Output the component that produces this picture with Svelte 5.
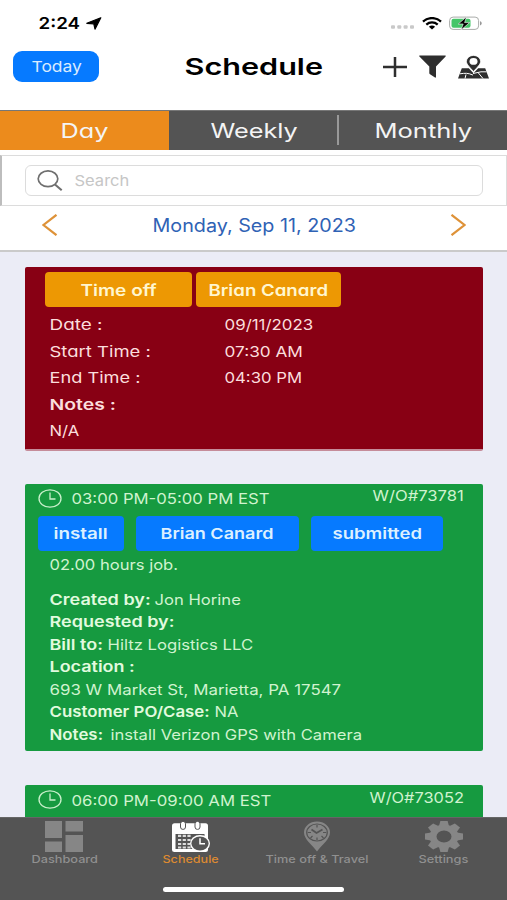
<script>
  const tabs = [
    { label: 'Day', w: 47 },
    { label: 'Weekly', w: 86 },
    { label: 'Monthly', w: 96 }
  ];
  const timeOff = [
    { label: 'Date :', lw: 52, value: '09/11/2023', vw: 88 },
    { label: 'Start Time :', lw: 100, value: '07:30 AM', vw: 77 },
    { label: 'End Time :', lw: 90, value: '04:30 PM', vw: 77 },
    { label: 'Notes :', lw: 65, strong: true },
    { label: 'N/A', lw: 29 }
  ];
  const details = [
    { label: 'Created by:', lw: 100, value: 'Jon Horine', vw: 85 },
    { label: 'Requested by:', lw: 124 },
    { label: 'Bill to:', lw: 53, value: 'Hiltz Logistics LLC', vw: 145 },
    { label: 'Location :', lw: 84 },
    { value: '693 W Market St, Marietta, PA 17547', vw: 291 },
    { label: 'Customer PO/Case:', lw: 159.5, value: 'NA', vw: 23 },
    { label: 'Notes:', lw: 53, value: 'install Verizon GPS with Camera', vw: 251, wide: true }
  ];

  // Stretches a label horizontally so it fills its column width.
  function fit(node, width) {
    const natural = node.offsetWidth;
    node.style.transform = `translateX(-0.5px) scaleX(${(width + 1) / natural})`;
  }
</script>

{#snippet t(text, w, cls = '')}
  <span class="t {cls}" style:width="{w}px"><span class="in" use:fit={w}>{text}</span></span>
{/snippet}

{#snippet clock()}
  <svg class="clock" width="24" height="19" viewBox="0 0 24 19" fill="none" stroke="#c9f0cb" stroke-width="1.3">
    <ellipse cx="12" cy="9.5" rx="11" ry="8.7" />
    <path d="M12 3.5V10h5.5" />
  </svg>
{/snippet}

<div class="screen">
  <div class="status">
    {@render t('2:24', 41, 'time')}
    <svg class="arrow" width="16" height="13" viewBox="0 0 16 13"><path d="M14.800.8.8 6.300 7.800 6.800 9 12.200Z" fill="#000" stroke="#000" stroke-width="1.200" stroke-linejoin="round" /></svg>
    <svg class="dots" width="24" height="4" viewBox="0 0 24 4" fill="#c9c9c9"><rect x="0" y=".3" width="4" height="3.400" rx="1" /><rect x="6.300" y=".3" width="4" height="3.400" rx="1" /><rect x="12.600" y=".3" width="4" height="3.400" rx="1" /><rect x="19" y=".3" width="4" height="3.400" rx="1" /></svg>
    <svg class="wifi" width="20" height="13" viewBox="0 0 20 13" fill="none" stroke="#000" stroke-width="2.300"><path d="M1 4.600C6-.1 14-.1 19 4.600" /><path d="M4.300 7.600c3.300-2.900 8.100-2.900 11.400 0" /><path d="M6.900 9.700c1.900-1.500 4.300-1.500 6.200 0L10 12.600Z" fill="#000" stroke="none" /></svg>
    <svg class="battery" width="34" height="15" viewBox="0 0 34 15">
      <rect x=".6" y="1.100" width="29" height="12.300" rx="3.500" fill="#fff" stroke="#a9aca9" />
      <rect x="2.500" y="2.800" width="19" height="9" rx="2" fill="#45c568" />
      <path d="M31 5.200c2.300.6 2.300 3.600 0 4.200Z" fill="#999" />
      <path d="M17.500.8 9.300 8h4.900l-2.200 6L20.600 6.600h-5Z" fill="#000" stroke="#fff" stroke-width=".6" />
    </svg>
  </div>

  <div class="header">
    <div class="today">{@render t('Today', 49, 'f15')}</div>
    <div class="title">{@render t('Schedule', 137, 'h geo')}</div>
    <svg class="plus" width="24" height="20" viewBox="0 0 24 20"><path d="M0 10h24M12 0v20" stroke="#2e2e2e" stroke-width="2.500" /></svg>
    <svg class="funnel" width="27" height="23" viewBox="0 0 27 23"><path d="M.8.5h25.400c.6 0 .7.7.4 1.100L17 11.500V22c0 .7-.5.800-1 .5l-5-3.200c-.5-.4-.7-.7-.7-1.300v-6.500L.4 1.600C0 1.200.2.500.8.500Z" fill="#2e2e2e" /></svg>
    <svg class="map" width="31" height="24" viewBox="0 0 31 24">
      <path d="M3.800 13.200h7l4.700 5 4.700-5h7L31 23.500H0Z" fill="#2e2e2e" />
      <path d="M2 18.800c5-.7 8-1 13 1.300M8 19.500l-1 4M15 18.500l8-1.700 5.500 0M20 17.500l5 6" stroke="#fff" stroke-width="1" fill="none" />
      <path d="M15.500 16.500C11.500 12 8.400 9.300 8.400 6.300a7.100 5.900 0 0 1 14.200 0c0 3-3.100 5.700-7.100 10.200Z" fill="#2e2e2e" stroke="#fff" stroke-width=".8" />
      <ellipse cx="15.500" cy="6.400" rx="4" ry="3.400" fill="#fff" />
    </svg>
  </div>

  <div class="tabs low">
    {#each tabs as tab, i}
      <div class="tab" class:active={i === 0} class:sep={i === 1}>{@render t(tab.label, tab.w, 'f20 geo')}</div>
    {/each}
  </div>

  <div class="search low">
    <div class="field">
      <svg width="26" height="21" viewBox="0 0 26 21" fill="none" stroke="#6f6f6f" stroke-width="1.700"><ellipse cx="11" cy="8.800" rx="9.800" ry="7.900" /><path d="m18 14.500 6.700 5.700" stroke-width="2.100" /></svg>
      {@render t('Search', 54, 'f15 hint')}
    </div>
  </div>

  <div class="datebar low">
    <svg width="16" height="22" viewBox="0 0 16 22"><path d="M14.500.8 1.500 11l13 10.200" fill="none" stroke="#de9238" stroke-width="2.200" /></svg>
    {@render t('Monday, Sep 11, 2023', 203, 'date')}
    <svg width="16" height="22" viewBox="0 0 16 22"><path d="m1.500.8 13 10.200-13 10.200" fill="none" stroke="#de9238" stroke-width="2.200" /></svg>
  </div>

  <div class="list low">
    <div class="card off">
      <div class="pills">
        <div class="pill p1">{@render t('Time off', 75, 'f16 geo')}</div>
        <div class="pill p2">{@render t('Brian Canard', 119, 'f16 geo')}</div>
      </div>
      {#each timeOff as r}
        <div class="row">
          <div class="label">{@render t(r.label, r.lw, r.strong ? 'f15 geo semi' : 'f15 geo')}</div>
          {#if r.value}{@render t(r.value, r.vw, 'f15 geo')}{/if}
        </div>
      {/each}
    </div>

    <div class="card job">
      <div class="top">
        {@render clock()}
        {@render t('03:00 PM-05:00 PM EST', 197, 'f15')}
        <div class="wo">{@render t('W/O#73781', 90, 'f15')}</div>
      </div>
      <div class="pills">
        <div class="pill b1">{@render t('install', 53, 'f15')}</div>
        <div class="pill b2">{@render t('Brian Canard', 112, 'f15')}</div>
        <div class="pill b3">{@render t('submitted', 88, 'f15')}</div>
      </div>
      <div class="hours">{@render t('02.00 hours job.', 127, 'f14')}</div>
      {#each details as d}
        <div class="line" class:wide={d.wide}>
          {#if d.label}{@render t(d.label, d.lw, 'f15 semi')}{/if}
          {#if d.value}{@render t(d.value, d.vw, 'f14')}{/if}
        </div>
      {/each}
    </div>

    <div class="card job next">
      <div class="top">
        {@render clock()}
        {@render t('06:00 PM-09:00 AM EST', 199, 'f15')}
        <div class="wo">{@render t('W/O#73052', 93, 'f15')}</div>
      </div>
    </div>
  </div>

  <div class="nav">
    <div class="items">
      <div class="item">
        <svg width="38" height="31" viewBox="0 0 38 31" fill="#868686"><path d="M0 0h17v17H0zM20.500 0H38v10.500H20.500zM0 20.500h17V31H0zM20.500 14H38v17H20.500z" /></svg>
        {@render t('Dashboard', 65, 'f11')}
      </div>
      <div class="item on">
        <svg width="38" height="31" viewBox="0 0 38 31">
          <rect y="2.200" width="36" height="28.800" rx="2.500" fill="#fff" />
          <path d="M3.500 13h29v15h-29z" fill="#545454" />
          <path d="M6 14.800h13M6 19h13M6 23h12M6 26.500h14" stroke="#ddd" stroke-width="2.200" stroke-dasharray="3.200 1.500" />
          <rect x="8.500" y=".4" width="5" height="8" rx="2.400" fill="#fff" stroke="#545454" />
          <rect x="23" y=".4" width="5" height="8" rx="2.400" fill="#fff" stroke="#545454" />
          <ellipse cx="28" cy="22.500" rx="10" ry="8.400" fill="#fff" />
          <ellipse cx="28" cy="22.500" rx="8.600" ry="7.100" fill="#545454" />
          <path d="M28 17.300v5.500h5" fill="none" stroke="#fff" stroke-width="1.500" />
        </svg>
        {@render t('Schedule', 55, 'f11')}
      </div>
      <div class="item">
        <svg width="26" height="31" viewBox="0 0 26 31">
          <path d="M13 30.500C8 23.500 0 18.500 0 11.200a13 10.600 0 0 1 26 0c0 7.300-8 12.300-13 19.300Z" fill="#868686" />
          <ellipse cx="13" cy="11.500" rx="10.300" ry="8.500" fill="none" stroke="#545454" stroke-width="1.200" />
          <path d="M7.500 8.500 12.500 12l6-3.500" fill="none" stroke="#545454" stroke-width="1.800" />
          <path d="M13 4v2.500M13 16.500V19M3.700 11.500H7M19 11.500h3.300M6.500 17l2-2M19.500 17l-2-2" stroke="#545454" stroke-width="1.200" />
        </svg>
        {@render t('Time off & Travel', 102, 'f11')}
      </div>
      <div class="item">
        <svg width="38" height="31" viewBox="-19 -15.500 38 31">
          <g transform="scale(1 .816)">
            <circle r="11" fill="none" stroke="#868686" stroke-width="7" />
            {#each [0, 45, 90, 135, 180, 225, 270, 315] as a}
              <path d="M-5-13-3.600-19h7.200L5-13Z" fill="#868686" transform="rotate({a})" />
            {/each}
          </g>
        </svg>
        {@render t('Settings', 49, 'f11')}
      </div>
    </div>
    <div class="home"></div>
  </div>
</div>

<style>
  :global(body) { margin: 0; background: #fff; }
  .screen { width: 507px; height: 900px; overflow: hidden; display: flex; flex-direction: column; background: #fff; font-family: Inter, 'Liberation Sans', sans-serif; color: #000; }
  .screen * { box-sizing: border-box; }
  .t { display: block; flex: none; white-space: nowrap; line-height: 20px; height: 20px; }
  .low .t { line-height: 22px; }
  .in { display: inline-block; transform-origin: 0 50%; }
  .geo { font-feature-settings: 'cv11'; }
  .f11 { font-size: 11px; }
  .f14 { font-size: 14.500px; }
  .f15 { font-size: 15px; }
  .f16 { font-size: 16px; }
  .f20 { font-size: 20px; }
  .semi { font-weight: 600; }

  .status { height: 46px; flex: none; display: flex; align-items: center; padding-left: 39px; }
  .time { font-size: 16.500px; font-weight: 600; }
  .arrow { margin-left: 6px; margin-top: 1px; }
  .dots { margin: 8px 0 0 289px; }
  .wifi { margin-left: 7px; }
  .battery { margin-left: 7px; margin-top: 1px; }

  .header { height: 63.500px; flex: none; display: flex; align-items: center; padding: 0 18px 22px 13px; }
  .today { width: 86px; height: 31px; border-radius: 9px; background: #067aff; color: #d9ebff; display: flex; align-items: center; justify-content: center; }
  .title { margin-left: 86px; }
  .h { font-size: 23.500px; font-weight: 600; line-height: 24px; height: 24px; }
  .plus { margin-left: 61px; }
  .funnel { margin-left: 12px; }
  .map { margin-left: 12px; flex: none; }
  .header svg { flex: none; }

  .tabs { height: 40.500px; flex: none; display: flex; background: #545454; color: #f4f4f4; border-top: 1px solid #777; }
  .tab { flex: 1; display: flex; align-items: center; justify-content: center; position: relative; }
  .active { background: #ec8b1c; }
  .sep::after { content: ''; position: absolute; right: -1px; top: 4px; bottom: 5px; width: 2px; background: #999; }

  .search { flex: none; margin-top: 4.500px; height: 51.500px; border: 1px solid #dcdcdc; border-left: 2px solid #bdbdbd; padding: 9px 23px 0 23px; }
  .field { height: 31px; border: 1px solid #dcdcdc; border-radius: 6px; display: flex; align-items: center; padding-left: 11px; }
  .field svg { margin-right: 12px; }
  .hint { color: #c6c6c6; }

  .datebar { height: 45.500px; flex: none; display: flex; align-items: center; justify-content: space-between; padding: 0 41px 5px 42px; border-bottom: 2px solid #cacaca; color: #2f62b5; }
  .date { font-size: 18px; }

  .list { flex: 1; min-height: 0; overflow: hidden; background: #ebecf6; padding: 15px 24.500px 0 25px; display: flex; flex-direction: column; }
  .card { flex: none; border-radius: 2px; overflow: hidden; }
  .pills { display: flex; }
  .pill { height: 35px; border-radius: 4px; display: flex; align-items: center; justify-content: center; font-weight: 600; }
  .off { height: 184px; background: #880014; color: #fbdedd; padding: 5px 0 0 19.500px; border-bottom: 2px solid #c58c9a; }
  .off .pill { background: #ed9803; color: #fff6cf; }
  .off .pills { gap: 4px; margin-bottom: 4.400px; }
  .p1 { width: 147px; }
  .p2 { width: 145.500px; }
  .row { height: 26.500px; display: flex; align-items: center; padding-left: 5.500px; }
  .label { width: 175px; }

  .job { margin-top: 33px; height: 267.500px; background: #169a40; color: #d0f3cf; padding-left: 12.500px; }
  .top { height: 32px; padding: 4.700px 19px 0 0; display: flex; align-items: flex-start; }
  .clock { margin: .8px 10.500px 0 0; }
  .wo { margin: -3px 1px 0 auto; }
  .job .pill { background: #067aff; color: #dcf0ff; }
  .b1 { width: 86.500px; margin-right: 11.500px; }
  .b2 { width: 163px; margin-right: 12px; }
  .b3 { width: 132.500px; }
  .hours { padding: 3.500px 0 13.500px 12.500px; }
  .line { height: 22.500px; display: flex; align-items: center; gap: 5px; padding-left: 12.500px; }
  .line .semi { color: #e2fadf; }
  .wide { gap: 8px; }
  .next { margin-top: 34px; }

  .nav { height: 83px; flex: none; background: #545454; display: flex; flex-direction: column; align-items: center; border-top: 1px solid #666; }
  .items { width: 100%; display: flex; padding: 3px 0 0 1px; height: 68.500px; }
  .item { width: 126.500px; display: flex; flex-direction: column; align-items: center; color: #909090; flex: none; }
  .item .t { line-height: 14px; height: 14px; font-weight: 500; }
  .on .t { color: #dd8a31; }
  .home { width: 181px; height: 5.500px; border-radius: 3px; background: #fff; }
</style>
